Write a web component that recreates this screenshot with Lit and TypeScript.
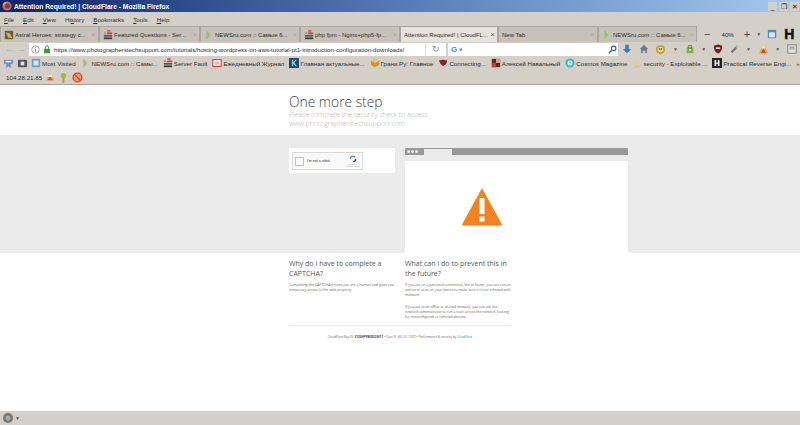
import { LitElement, html, css, svg } from "lit";
import { customElement } from "lit/decorators.js";

const ic: Record<string, any> = {
  ff: svg`<circle cx="6" cy="6" r="5.5" fill="#e8632a"/><circle cx="6.5" cy="6" r="3" fill="#3b4f9e"/><path d="M1 6C1 3 3 1 6 1c-1 1-2 2-2 3-2 0-2 1-3 2z" fill="#f9b233"/>`,
  astral: svg`<rect x="1" y="1" width="10" height="10" fill="#6b5a3a"/><path d="M2 3l5 1 3 6-5-1z" fill="#e0b050"/>`,
  sf: svg`<rect x="1" y="9" width="10" height="2" fill="#333"/><rect x="1" y="6" width="10" height="2" fill="#555"/><rect x="5" y="3" width="6" height="2" fill="#c33"/><rect x="1" y="3" width="3" height="2" fill="#a88"/><rect x="5" y="0" width="4" height="2" fill="#c55"/>`,
  news: svg`<path d="M4 1l3 5-3 5z" fill="#8fc24a"/><rect x="3" y="1" width="1" height="10" fill="#8fc24a"/>`,
  dl: svg`<path d="M4 1h4v5h3L6 11 1 6h3z" fill="#2b7cc4"/>`,
  home: svg`<path d="M6 1l5 5H9.500v5h-2V8h-3v3h-2V6H1z" fill="#6b7b8c"/>`,
  mon: svg`<circle cx="6" cy="6" r="5" fill="#c9a030"/><circle cx="6" cy="6" r="3" fill="#e8d8a0"/><circle cx="5" cy="5.500" r=".8" fill="#333"/><circle cx="7" cy="5.500" r=".8" fill="#333"/>`,
  grn: svg`<rect x="2" y="4" width="8" height="7" fill="#7fb24a"/><rect x="4" y="2" width="4" height="3" fill="none" stroke="#5c8a30"/><rect x="5" y="6" width="2" height="2" fill="#dfe"/>`,
  ub: svg`<path d="M6 .5l5 1.500c0 5-1.500 8-5 9.500-3.500-1.500-5-4.500-5-9.500z" fill="#8d1414"/><rect x="3.500" y="4" width="5" height="2" fill="#eee"/>`,
  tool: svg`<path d="M2 9l5-5 3-1-1 3-5 5z" fill="#778"/><circle cx="9" cy="3" r="1.500" fill="#aab"/>`,
  multi: svg`<path d="M6 1l5 9H1z" fill="#e8a53a"/><path d="M6 5l3 5H3z" fill="#d9483b"/><path d="M6 1l2 4H4z" fill="#efe6c8"/>`,
  cal: svg`<rect x="1" y="1" width="10" height="10" fill="#4a8ac4"/><rect x="2.500" y="4" width="7" height="6" fill="#dbe9f5"/>`,
  feed: svg`<path d="M1 2h10v4l-3 1 1 4-3-2-3 2 1-4-3-1z" fill="#6a90c4"/><rect x="3" y="3" width="6" height="2" fill="#dde"/>`,
  pocket: svg`<rect x="1" y="2" width="10" height="8" rx="1" fill="#50565f"/><rect x="4" y="4" width="4" height="4" fill="#e8e8e8"/>`,
  folder: svg`<rect x="1" y="1" width="10" height="10" rx="1" fill="#6c9bd0"/><rect x="3" y="3" width="6" height="6" fill="#dbe6f5"/>`,
  ejed: svg`<rect x="1" y="2" width="10" height="8" fill="#fff" stroke="#d22" stroke-width="1.200"/><rect x="3.500" y="4" width="5" height="4" fill="#f3b0b0"/>`,
  k: svg`<rect x="0" y="0" width="12" height="12" fill="#1f4a70"/><path d="M3.500 2h1.500v3.500L8 2h1.500L6.500 5.800 9.500 10H8L5 6.500V10H3.500z" fill="#9cd"/>`,
  box: svg`<path d="M6 1l5 2.500v5L6 11 1 8.500v-5z" fill="#c89a2e"/><path d="M6 6L1 3.500 6 1l5 2.500z" fill="#e8c878"/>`,
  conn: svg`<path d="M1 3l5-1 5 1-1 4-4 3-3-3z" fill="#8c2020"/>`,
  alex: svg`<rect x="1" y="1" width="10" height="10" fill="#5a2a20"/><rect x="6" y="1" width="5" height="5" fill="#d8a080"/><rect x="1" y="6" width="5" height="5" fill="#c04030"/>`,
  cosmos: svg`<circle cx="6" cy="6" r="5.500" fill="#3bb7d0"/><circle cx="6" cy="6" r="3" fill="#d8f4f8"/><path d="M6 4v2h2" stroke="#3bb7d0" fill="none"/>`,
  sec: svg`<circle cx="6" cy="4" r="2.500" fill="#e8c8a8"/><path d="M2 11c0-4 8-4 8 0z" fill="#e8b890"/>`,
  h: svg`<rect x="0" y="0" width="12" height="12" fill="#222"/><path d="M3 2.500h2v3h2v-3h2v7H7v-2.500H5v2.500H3z" fill="#eee"/>`,
  flame: svg`<path d="M6 1l5 9H1z" fill="#e8a53a"/><path d="M6 5l3 5H3z" fill="#d9483b"/><path d="M4 3h4l1 3H3z" fill="#efe6d0"/>`,
  pin: svg`<circle cx="6" cy="4" r="3" fill="#a8b838"/><rect x="5" y="6" width="2" height="6" fill="#b89838"/>`,
  no: svg`<circle cx="6" cy="6" r="4.800" fill="#f0a070" stroke="#d8401c" stroke-width="1.400"/><path d="M3 3l6 6" stroke="#d8401c" stroke-width="1.400"/>`,
};

const icon = (n: string, s = 12) =>
  html`<svg class="icon" width=${s} height=${s} viewBox="0 0 12 12">${ic[n]}</svg>`;

const tabs: [string, string, number][] = [
  ["astral", "Astral Heroes: strategy c...", 99],
  ["sf", "Featured Questions - Ser...", 101],
  ["news", "NEWSru.com :: Самые 6...", 100],
  ["sf", "php fpm - Nginx+php5-fp...", 100],
  ["", "Attention Required! | CloudFL...", 98],
  ["", "New Tab", 100],
  ["news", "NEWSru.com :: Самые 6...", 99],
];

const bookmarks: [string, string][] = [
  ["news", "NEWSru.com :: Самы..."],
  ["sf", "Server Fault"],
  ["ejed", "Ежедневный Журнал"],
  ["k", "Главная актуальные..."],
  ["box", "Грани.Ру: Главное"],
  ["conn", "Connecting..."],
  ["alex", "Алексей Навальный"],
  ["cosmos", "Cosmos Magazine"],
  ["sec", "security - Exploitable ..."],
  ["h", "Practical Reverse Engi..."],
];

@customElement("app-root")
export class AppRoot extends LitElement {
  static styles = css`
    :host { display: flex; flex-direction: column; width: 800px; height: 425px; overflow: hidden;
      background: #fff; font-family: "Liberation Sans", Arial, sans-serif; }
    .icon { flex: none; display: block; }
    .title { height: 12px; display: flex; align-items: center; gap: 2px; padding: 0 1px 0 2px;
      background: linear-gradient(90deg, #0a246a, #5f82bd 55%, #a6caf0); color: #fff; font-size: 6.700px; font-weight: 700; }
    .title .grow { flex: 1; }
    .wb { width: 9px; height: 9px; background: #d4d0c8; color: #222; font-size: 7px; font-weight: 400; line-height: 9px; text-align: center; }
    .chrome { background: #d4d0c8; color: #2c2c2c; font-size: 6.200px; border-bottom: 1px solid #a8a49c; }
    .menu { height: 14px; display: flex; align-items: center; gap: 9px; padding: 0 4px; }
    .menu u { text-decoration: underline; }
    .tabs { height: 16px; display: flex; align-items: stretch; }
    .tab { flex: none; box-sizing: border-box; display: flex; align-items: center; gap: 1px; padding: 0 2px 0 3px; overflow: hidden;
      background: #c6c2ba; border: 1px solid #aaa69e; border-bottom: 0; white-space: nowrap; font-size: 6px; }
    .tab.on { background: #e6e3dc; }
    .tab.plain { padding-left: 3px; }
    .tab span { flex: 1; min-width: 0; }
    .tab i { font-style: normal; color: #a8a49c; font-size: 8px; flex: none; }
    .tab.on i { color: #555; }
    .tools { flex: 1; display: flex; align-items: center; padding: 0 1px 0 7px; gap: 6px; }
    .tools b { font-size: 11px; font-weight: 400; color: #445; line-height: 1; }
    .tools .z { margin: 0 4px 0 5px; }
    .tools strong { font-size: 14px; line-height: 1; font-weight: 900; color: #111; margin-left: 1px; -webkit-text-stroke: .5px #111; }
    .nav { height: 14px; display: flex; align-items: center; }
    .arrows { width: 29px; display: flex; gap: 3px; padding-left: 5px; box-sizing: border-box; color: #a9aeb4; font-size: 9px; }
    .url { width: 417px; height: 13px; background: #fff; display: flex; align-items: center; gap: 3px; box-sizing: border-box; padding-left: 2px; overflow: hidden; white-space: nowrap; font-size: 6.150px; }
    .url .addr { flex: 1; min-width: 0; }
    .url .rl { width: 20px; border-left: 1px solid #ddd; text-align: center; color: #888; font-size: 9px; line-height: 11px; }
    .search { width: 170px; margin-left: 2px; height: 13px; background: #fff; display: flex; align-items: center; justify-content: space-between; padding: 0 1px 0 3px; box-sizing: border-box; font-size: 7px; color: #888; }
    .g { color: #4285f4; font-weight: 700; font-size: 8px; }
    .navr { flex: 1; display: flex; align-items: center; justify-content: space-between; padding: 0 3px 0 4px; }
    .dd { font-size: 5px; color: #555; }
    .bm { height: 14px; display: flex; align-items: center; gap: 3px; padding-left: 3px; white-space: nowrap; }
    .bm .item { display: flex; align-items: center; gap: 1px; margin-right: 2px; }
    .bm .more { margin-left: auto; padding-right: 2px; color: #555; }
    .add { height: 14px; display: flex; align-items: center; gap: 3px; padding-left: 6px; }
    .page { flex: 1; min-height: 0; display: flex; flex-direction: column; color: #404040; font-family: "Open Sans", sans-serif; }
    .wrap { width: 222px; margin-left: 289px; }
    .head { height: 50px; box-sizing: border-box; padding-top: 8px; }
    h1 { margin: 0; font-size: 13.800px; line-height: 17px; font-weight: 300; color: #404040; }
    .sub { font-size: 6.900px; line-height: 9px; color: #b4b4b4; font-weight: 300; white-space: nowrap; }
    .band { height: 118px; background: #ebebeb; box-sizing: border-box; padding: 13px 0 0 289px; display: flex; gap: 10px; overflow: hidden; }
    .cap { width: 106px; height: 25px; background: #fff; box-sizing: border-box; padding: 4px 3px; flex: none; }
    .rc { width: 71px; height: 18px; box-sizing: border-box; background: #f9f9f9; border: 1px solid #d8d8d8; display: flex; align-items: center; padding: 0 2px 0 2px; gap: 3px; font-size: 3.600px; color: #333; font-family: "Liberation Sans", sans-serif; }
    .rc .box { width: 7px; height: 7px; background: #fff; border: 1px solid #c0c0c0; flex: none; }
    .rc .g2 { flex: 1; white-space: nowrap; }
    .rcl { display: flex; flex-direction: column; align-items: center; font-size: 2px; color: #999; line-height: 2.500px; white-space: nowrap; }
    .bw { width: 223px; flex: none; display: flex; flex-direction: column; }
    .bar { height: 7px; background: #999; border-radius: 1px 1px 0 0; display: flex; padding-left: 2px; gap: 1px; align-items: center; }
    .dot { width: 3px; height: 3px; border-radius: 50%; background: #e8e8e8; }
    .btab { height: 6px; width: 28px; margin: 1px 0 0 5px; background: #ebebeb; align-self: flex-start; }
    .gap { height: 6px; }
    .view { flex: 1; background: #fff; display: flex; padding: 26px 0 0 56px; }
    .cols { display: flex; gap: 10px; padding-top: 6px; }
    .cols > div { width: 106px; flex: none; }
    h2 { margin: 0 0 3px; font-size: 7px; line-height: 10px; font-weight: 400; color: #555; white-space: nowrap; }
    .cols p { margin: 0 0 6px; font-size: 3.500px; line-height: 5.200px; color: #666; white-space: nowrap; }
    .hr { border-top: 1px solid #eee; }
    .foot { margin-top: 9px; text-align: center; font-size: 3.050px; color: #666; white-space: nowrap; line-height: 5px; }
    .foot a { color: #2f7bbf; }
    .foot b { color: #444; }
    .status { height: 14px; margin-top: auto; background: #d4d0c8; display: flex; align-items: center; padding-left: 2px; gap: 1px; flex: none; color: #333; font-size: 6px; }
    .page .spacer { flex: 1; }
  `;

  render() {
    return html`
      <div class="title">
        ${icon("ff", 10)}<span>Attention Required! | CloudFlare - Mozilla Firefox</span>
        <span class="grow"></span><span class="wb">_</span><span class="wb">❐</span><span class="wb">✕</span>
      </div>
      <div class="chrome">
        <div class="menu">
          <span><u>F</u>ile</span><span><u>E</u>dit</span><span><u>V</u>iew</span><span>Hi<u>s</u>tory</span>
          <span><u>B</u>ookmarks</span><span><u>T</u>ools</span><span><u>H</u>elp</span>
        </div>
        <div class="tabs">
          ${tabs.map(([i, t, w], k) => html`
            <div class=${`tab ${k === 4 ? "on" : ""} ${i ? "" : "plain"}`} style=${`width:${w}px`}>
              ${i ? icon(i, 10) : ""}<span>${t}</span><i>×</i>
            </div>`)}
          <div class="tools">
            <b>−</b><span class="z">40%</span><b>+</b><span class="dd">▼</span>
            ${icon("cal", 10)}<strong>H</strong>
          </div>
        </div>
        <div class="nav">
          <div class="arrows"><span>←</span><span>→</span></div>
          <div class="url">
            <svg class="icon" width="9" height="9" viewBox="0 0 12 12"><circle cx="6" cy="6" r="5" fill="none" stroke="#888"/><rect x="5.400" y="5" width="1.200" height="4" fill="#888"/><rect x="5.400" y="3" width="1.200" height="1.200" fill="#888"/></svg>
            <svg class="icon" width="8" height="9" viewBox="0 0 10 12"><rect x="1" y="5" width="8" height="6" fill="#3a9a3a"/><path d="M3 5V3a2 2 0 014 0v2" fill="none" stroke="#3a9a3a" stroke-width="1.300"/></svg>
            <span class="addr">https://www.photographerstechsupport.com/tutorials/hosting-wordpress-on-aws-tutorial-pt1-introduction-configuration-downloads/</span>
            <span class="rl">↻</span>
          </div>
          <div class="search"><span><span class="g">G</span> ▾</span>
            <svg class="icon" width="9" height="9" viewBox="0 0 12 12"><circle cx="7.500" cy="4.500" r="3" fill="none" stroke="#2a5f9e" stroke-width="1.500"/><path d="M5 7l-4 4" stroke="#2a5f9e" stroke-width="2"/></svg>
          </div>
          <div class="navr">
            ${icon("dl", 10)}${icon("home", 10)}${icon("mon", 11)}<span class="dd">▼</span>${icon("grn", 10)}<span class="dd">▼</span>
            ${icon("ub", 10)}${icon("tool", 10)}<span class="dd">▼</span>${icon("multi", 11)}<span class="dd">▼</span>
            <svg class="icon" width="10" height="10" viewBox="0 0 12 12"><rect x="1" y="1" width="10" height="10" fill="#e8e6e0" stroke="#777"/><path d="M3 4h6M3 6h6" stroke="#777"/></svg>
          </div>
        </div>
        <div class="bm">
          ${icon("feed", 11)}${icon("pocket", 11)}
          <span class="item">${icon("folder", 10)}Most Visited</span>
          ${bookmarks.map(([i, t]) => html`<span class="item">${icon(i, 10)}${t}</span>`)}
          <span class="more">»</span>
        </div>
        <div class="add"><span>104.28.21.85</span>${icon("flame", 10)}${icon("pin", 11)}${icon("no", 11)}</div>
      </div>
      <div class="page">
        <div class="wrap head">
          <h1>One more step</h1>
          <div class="sub">Please complete the security check to access</div>
          <div class="sub">www.photographerstechsupport.com</div>
        </div>
        <div class="band">
          <div class="cap">
            <div class="rc"><span class="box"></span><span class="g2">I'm not a robot</span>
              <span class="rcl">
                <svg class="icon" width="8" height="8" viewBox="0 0 12 12"><path d="M2 6a4 4 0 017-2.700" fill="none" stroke="#4a90e2" stroke-width="2"/><path d="M10 6a4 4 0 01-4 4" fill="none" stroke="#2a3f9e" stroke-width="2"/></svg>
                <span>reCAPTCHA</span><span>Privacy - Terms</span>
              </span>
            </div>
          </div>
          <div class="bw">
            <div class="bar"><i class="dot"></i><i class="dot"></i><i class="dot"></i><span class="btab"></span></div>
            <div class="gap"></div>
            <div class="view">
              <svg width="42" height="39" viewBox="0 0 42 39"><path d="M21 1L41 37.500a1 1 0 01-1 1H2a1 1 0 01-1-1z" fill="#f6821f"/><rect x="18.500" y="11" width="5" height="16" fill="#fff"/><rect x="18.500" y="29.500" width="5" height="5" fill="#fff"/></svg>
            </div>
          </div>
        </div>
        <div class="wrap">
          <div class="cols">
            <div>
              <h2>Why do I have to complete a<br />CAPTCHA?</h2>
              <p>Completing the CAPTCHA proves you are a human and gives you<br />temporary access to the web property.</p>
            </div>
            <div>
              <h2>What can I do to prevent this in<br />the future?</h2>
              <p>If you are on a personal connection, like at home, you can run an<br />anti-virus scan on your device to make sure it is not infected with<br />malware.</p>
              <p>If you are at an office or shared network, you can ask the<br />network administrator to run a scan across the network looking<br />for misconfigured or infected devices.</p>
            </div>
          </div>
          <div class="hr"></div>
          <div class="foot">CloudFlare Ray ID: <b>3120HPP868323611</b> • Your IP: 46.101.19.87 • Performance &amp; security by <a>CloudFlare</a></div>
        </div>
        <div class="spacer"></div>
        <div class="status">
          <svg class="icon" width="12" height="12" viewBox="0 0 12 12"><circle cx="6" cy="6" r="5" fill="#777"/><circle cx="6" cy="6" r="2.500" fill="#aaa"/></svg>
          <span class="dd">▼</span>
        </div>
      </div>
    `;
  }
}
